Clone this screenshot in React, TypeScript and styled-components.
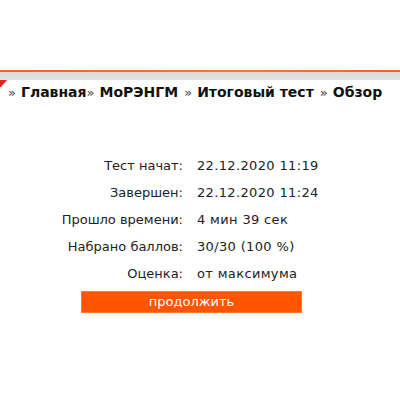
import React from "react";
import styled, { createGlobalStyle } from "styled-components";

const Global = createGlobalStyle`
  html, body { margin: 0; padding: 0; background: #ffffff; }
  body { font-family: "DejaVu Sans", Verdana, sans-serif; color: #222; }
`;

const Page = styled.div`
  width: 400px;
  height: 400px;
  overflow: hidden;
  display: flex;
  flex-direction: column;
`;

const TopSpace = styled.div`
  height: 70px;
  background: #ffffff;
`;

const OrangeLine = styled.div`
  height: 2px;
  background: linear-gradient(to right, #f0641e, #f57a2e 60%, #f0641e);
`;

const GrayBand = styled.div`
  height: 8px;
  background: linear-gradient(to bottom, #d9d9d9, #e2e2e2);
`;

const Crumbs = styled.div`
  position: relative;
  display: flex;
  align-items: baseline;
  padding: 3px 0 0 8px;
  line-height: 18px;
  font-size: 14px;
  white-space: nowrap;
`;

const Corner = styled.svg`
  position: absolute;
  left: 0;
  top: 0;
`;

const Sep = styled.span`
  font-weight: normal;
  color: #444;
  font-size: 13px;
  margin-right: 5px;
`;

const Crumb = styled.span<{ $gap?: number }>`
  font-weight: bold;
  color: #111;
  margin-right: ${(p) => p.$gap ?? 6}px;
`;

const Summary = styled.div`
  margin-top: 50px;
  display: grid;
  grid-template-columns: 183px auto;
  column-gap: 14px;
  font-size: 13px;
  line-height: 27px;
  color: #222;
`;

const Label = styled.div`
  text-align: right;
  white-space: nowrap;
`;

const Value = styled.div`
  white-space: nowrap;
  letter-spacing: 0.35px;
`;

const Continue = styled.button`
  margin: 4px 0 0 81px;
  width: 221px;
  height: 22px;
  padding: 0;
  border: 1px solid #ff7a3c;
  background: #ff5500;
  color: #ffffff;
  font-family: "DejaVu Sans", Verdana, sans-serif;
  font-size: 13px;
  line-height: 20px;
  cursor: pointer;
`;

const rows: [string, string][] = [
  ["Тест начат:", "22.12.2020 11:19"],
  ["Завершен:", "22.12.2020 11:24"],
  ["Прошло времени:", "4 мин 39 сек"],
  ["Набрано баллов:", "30/30 (100 %)"],
  ["Оценка:", "от максимума"],
];

export default function App() {
  return (
    <Page>
      <Global />
      <TopSpace />
      <OrangeLine />
      <GrayBand />
      <Crumbs>
        <Corner width="8" height="8" viewBox="0 0 8 8">
          <polygon points="0,0 7,0 1,7 0,7" fill="#e8231c" />
        </Corner>
        <Sep>»</Sep>
        <Crumb $gap={0}>Главная</Crumb>
        <Sep>»</Sep>
        <Crumb>МоРЭНГМ</Crumb>
        <Sep>»</Sep>
        <Crumb>Итоговый тест</Crumb>
        <Sep>»</Sep>
        <Crumb>Обзор</Crumb>
      </Crumbs>
      <Summary>
        {rows.map(([l, v]) => (
          <React.Fragment key={l}>
            <Label>{l}</Label>
            <Value>{v}</Value>
          </React.Fragment>
        ))}
      </Summary>
      <div>
        <Continue>продолжить</Continue>
      </div>
    </Page>
  );
}
